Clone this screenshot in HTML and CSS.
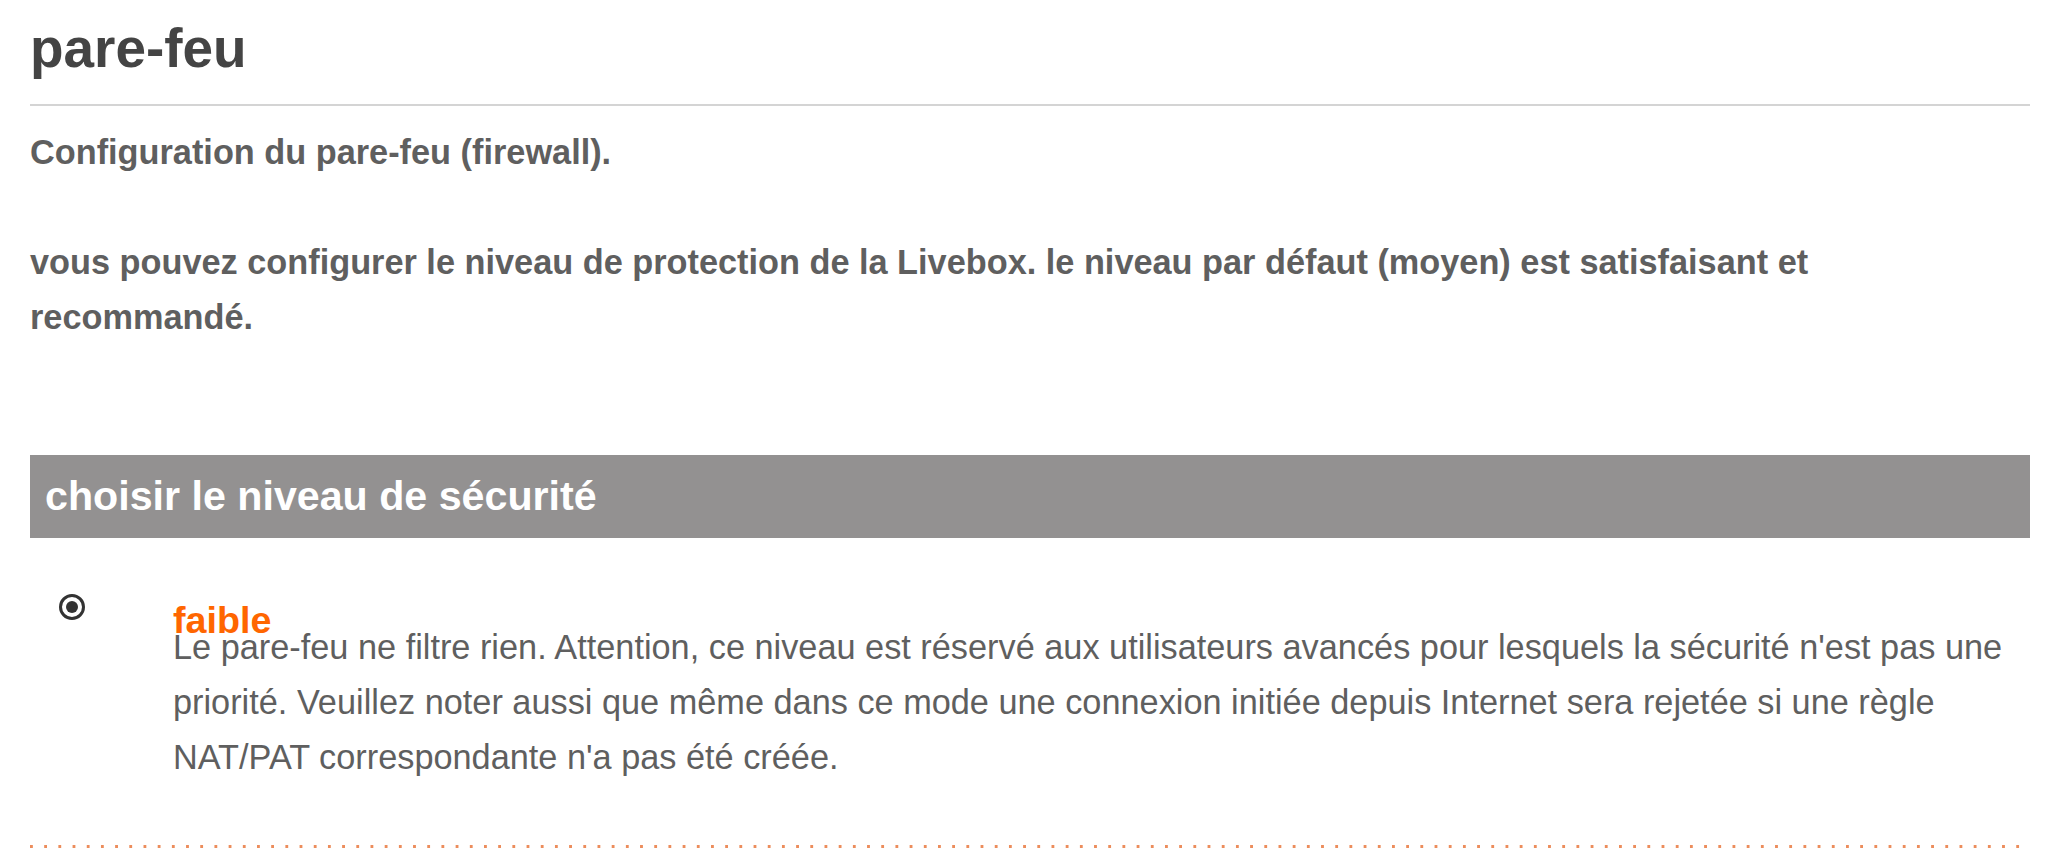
FILE: index.html
```html
<!DOCTYPE html>
<html lang="fr">
<head>
    <meta charset="UTF-8">
    <title>pare-feu</title>
    <link rel="stylesheet" href="styles.css">
</head>
<body>
    <div class="page">
        <h1 class="page-title">pare-feu</h1>

        <div class="intro">
            <p>Configuration du pare-feu (firewall).</p>
            <p class="intro-text">vous pouvez configurer le niveau de protection de la Livebox. le niveau par défaut (moyen) est satisfaisant et recommandé.</p>
        </div>

        <h2 class="section-title">choisir le niveau de sécurité</h2>

        <div class="level-list">
            <label class="level-option">
                <span class="level-radio-col">
                    <input type="radio" name="level" value="faible" class="level-radio" checked>
                </span>
                <span class="level-text">
                    <span class="level-name">faible</span>
                    <span class="level-desc">Le pare-feu ne filtre rien. Attention, ce niveau est réservé aux utilisateurs avancés pour lesquels la sécurité n'est pas une priorité. Veuillez noter aussi que même dans ce mode une connexion initiée depuis Internet sera rejetée si une règle NAT/PAT correspondante n'a pas été créée.</span>
                </span>
            </label>
            <div class="level-sep"></div>
        </div>
    </div>
</body>
</html>
```

FILE: styles.css
```css
body {
    margin: 0;
    background-color: #ffffff;
    font-family: "Liberation Sans", Arial, sans-serif;
    font-size: 34.3px;
    color: #5f5f5f;
}
.page {
    padding: 16px 26px 0 30px;
}
.page-title {
    margin: 0;
    padding-bottom: 24px;
    border-bottom: 2px solid #d4d4d4;
    font-size: 54.9px;
    font-weight: bold;
    line-height: normal;
    color: #444444;
}
.intro {
    padding-top: 19px;
    font-weight: bold;
    line-height: 54.9px;
    color: #5f5f5f;
}
.intro p {
    margin: 0;
}
.intro .intro-text {
    margin-top: 55px;
}
.section-title {
    margin: 110px 0 0;
    padding: 0 15px;
    height: 83px;
    line-height: 83px;
    background-color: #939191;
    color: #ffffff;
    font-size: 41.2px;
    font-weight: bold;
}
.level-list {
    padding-top: 56px;
}
.level-option {
    display: grid;
    grid-template-columns: 143px 1fr;
    align-items: start;
}
.level-radio-col {
    padding-left: 29px;
}
.level-radio {
    appearance: none;
    -webkit-appearance: none;
    display: block;
    margin: 0;
    width: 26px;
    height: 26px;
    border: 3px solid #333333;
    border-radius: 50%;
    background-color: #ffffff;
    box-sizing: border-box;
    position: relative;
}
.level-radio:checked::after {
    content: "";
    position: absolute;
    left: 4px;
    top: 4px;
    width: 12px;
    height: 12px;
    border-radius: 50%;
    background-color: #333333;
}
.level-text {
    display: block;
    padding-top: 5px;
}
.level-name {
    display: block;
    font-size: 37.7px;
    font-weight: bold;
    line-height: normal;
    color: #ff6600;
}
.level-desc {
    display: block;
    margin-top: -22px;
    line-height: 54.9px;
    color: #5f5f5f;
}
.level-sep {
    margin-top: 61px;
    height: 3px;
    background-image: linear-gradient(to right, #ec8d5c 0, #ec8d5c 3px, transparent 3px);
    background-size: 14.2px 3px;
    background-repeat: repeat-x;
}
```
